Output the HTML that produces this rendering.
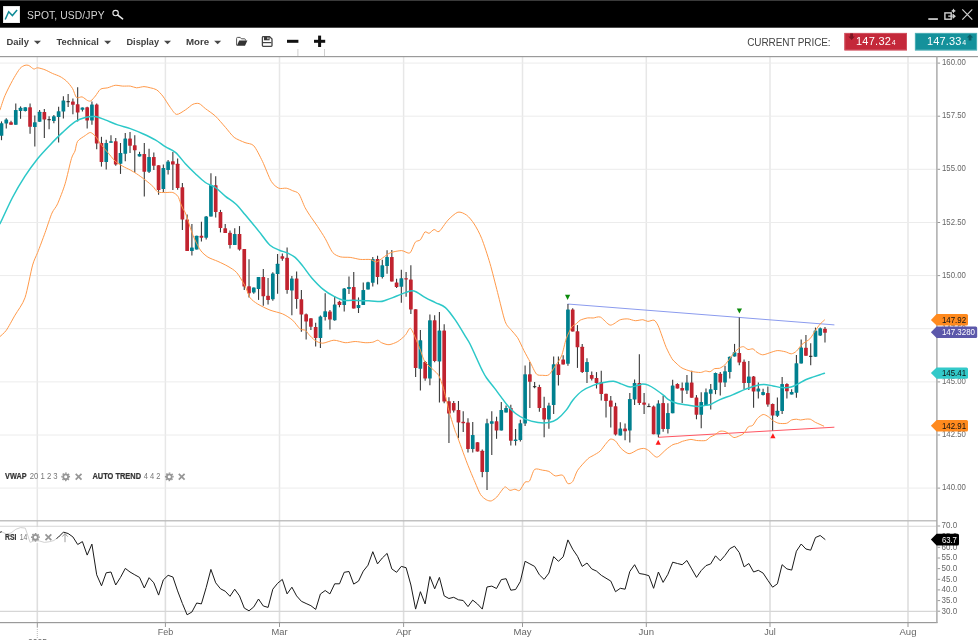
<!DOCTYPE html>
<html lang="en"><head><meta charset="utf-8"><title>SPOT, USD/JPY</title>
<style>html,body{margin:0;padding:0;background:#fff;overflow:hidden}svg{display:block;will-change:transform}text{font-family:"Liberation Sans",Arial,sans-serif}.ax{font-size:8.7px;fill:#666}.tb{font-size:9.4px;font-weight:bold;fill:#3f3f3f}.il{font-size:8.5px;font-weight:bold;fill:#333;stroke:#333;stroke-width:0.2px}.iv{font-size:8.5px;fill:#777}</style></head><body>
<svg width="978" height="640" viewBox="0 0 978 640">
<rect width="978" height="640" fill="#fff"/>
<g stroke="#e7e7e7" stroke-width="1.5">
<line x1="37.3" y1="57" x2="37.3" y2="520.5"/>
<line x1="165.4" y1="57" x2="165.4" y2="520.5"/>
<line x1="279.5" y1="57" x2="279.5" y2="520.5"/>
<line x1="403.6" y1="57" x2="403.6" y2="520.5"/>
<line x1="522.5" y1="57" x2="522.5" y2="520.5"/>
<line x1="646.3" y1="57" x2="646.3" y2="520.5"/>
<line x1="770.0" y1="57" x2="770.0" y2="520.5"/>
<line x1="908.0" y1="57" x2="908.0" y2="520.5"/>
</g>
<g stroke="#ececec" stroke-width="1">
<line x1="0" y1="63.1" x2="936" y2="63.1"/>
<line x1="0" y1="116.2" x2="936" y2="116.2"/>
<line x1="0" y1="169.3" x2="936" y2="169.3"/>
<line x1="0" y1="222.5" x2="936" y2="222.5"/>
<line x1="0" y1="275.6" x2="936" y2="275.6"/>
<line x1="0" y1="328.7" x2="936" y2="328.7"/>
<line x1="0" y1="381.9" x2="936" y2="381.9"/>
<line x1="0" y1="435.0" x2="936" y2="435.0"/>
<line x1="0" y1="488.1" x2="936" y2="488.1"/>
</g>
<g stroke="#dedede" stroke-width="1.6">
<line x1="37.3" y1="521" x2="37.3" y2="622.5"/>
<line x1="165.4" y1="521" x2="165.4" y2="622.5"/>
<line x1="279.5" y1="521" x2="279.5" y2="622.5"/>
<line x1="403.6" y1="521" x2="403.6" y2="622.5"/>
<line x1="522.5" y1="521" x2="522.5" y2="622.5"/>
<line x1="646.3" y1="521" x2="646.3" y2="622.5"/>
<line x1="770.0" y1="521" x2="770.0" y2="622.5"/>
<line x1="908.0" y1="521" x2="908.0" y2="622.5"/>
</g>
<g stroke="#d6d6d6" stroke-width="1.1">
<line x1="0" y1="526.2" x2="936" y2="526.2"/><line x1="0" y1="611.4" x2="936" y2="611.4"/>
</g>
<line x1="567.6" y1="304" x2="834.4" y2="324.9" stroke="#8b9bee" stroke-width="1.0"/>
<line x1="658.4" y1="437.3" x2="834.4" y2="427.2" stroke="#ff5562" stroke-width="1.0"/>
<g stroke="#3a3a3a" stroke-width="1.1">
<line x1="1.5" y1="121.4" x2="1.5" y2="140.2"/>
<line x1="6.26" y1="118.2" x2="6.26" y2="128.4"/>
<line x1="11.02" y1="120.7" x2="11.02" y2="124.8"/>
<line x1="15.78" y1="103.6" x2="15.78" y2="124.8"/>
<line x1="20.54" y1="106.4" x2="20.54" y2="118.8"/>
<line x1="25.3" y1="107.2" x2="25.3" y2="111.5"/>
<line x1="30.06" y1="103.6" x2="30.06" y2="133.8"/>
<line x1="34.82" y1="115.4" x2="34.82" y2="146.6"/>
<line x1="39.58" y1="110.1" x2="39.58" y2="121.8"/>
<line x1="44.34" y1="109.0" x2="44.34" y2="137.9"/>
<line x1="49.1" y1="116.2" x2="49.1" y2="129.3"/>
<line x1="53.86" y1="115.1" x2="53.86" y2="123.3"/>
<line x1="58.62" y1="106.7" x2="58.62" y2="142.4"/>
<line x1="63.38" y1="96.3" x2="63.38" y2="118.6"/>
<line x1="68.14" y1="94.0" x2="68.14" y2="107.0"/>
<line x1="72.9" y1="98.6" x2="72.9" y2="114.3"/>
<line x1="77.66" y1="87.3" x2="77.66" y2="121.6"/>
<line x1="82.42" y1="107.6" x2="82.42" y2="111.5"/>
<line x1="87.18" y1="106.8" x2="87.18" y2="128.6"/>
<line x1="91.94" y1="101.4" x2="91.94" y2="124.8"/>
<line x1="96.7" y1="103.6" x2="96.7" y2="149.3"/>
<line x1="101.46" y1="136.8" x2="101.46" y2="166.6"/>
<line x1="106.22" y1="139.8" x2="106.22" y2="169.4"/>
<line x1="110.98" y1="135.3" x2="110.98" y2="142.8"/>
<line x1="115.74" y1="137.9" x2="115.74" y2="165.7"/>
<line x1="120.5" y1="143.0" x2="120.5" y2="173.9"/>
<line x1="125.26" y1="133.1" x2="125.26" y2="161.2"/>
<line x1="130.02" y1="132.0" x2="130.02" y2="152.9"/>
<line x1="134.78" y1="135.3" x2="134.78" y2="172.5"/>
<line x1="139.54" y1="151.8" x2="139.54" y2="156.5"/>
<line x1="144.3" y1="143.0" x2="144.3" y2="196.4"/>
<line x1="149.06" y1="148.8" x2="149.06" y2="173.1"/>
<line x1="153.82" y1="152.6" x2="153.82" y2="170.0"/>
<line x1="158.58" y1="165.3" x2="158.58" y2="194.7"/>
<line x1="163.34" y1="164.4" x2="163.34" y2="192.3"/>
<line x1="168.1" y1="160.1" x2="168.1" y2="174.5"/>
<line x1="172.86" y1="152.0" x2="172.86" y2="190.0"/>
<line x1="177.62" y1="158.5" x2="177.62" y2="189.7"/>
<line x1="182.38" y1="183.1" x2="182.38" y2="230.1"/>
<line x1="187.14" y1="214.4" x2="187.14" y2="250.9"/>
<line x1="191.9" y1="223.9" x2="191.9" y2="255.4"/>
<line x1="196.66" y1="235.7" x2="196.66" y2="249.5"/>
<line x1="201.42" y1="221.7" x2="201.42" y2="241.6"/>
<line x1="206.18" y1="216.0" x2="206.18" y2="239.6"/>
<line x1="210.94" y1="173.3" x2="210.94" y2="216.6"/>
<line x1="215.7" y1="176.2" x2="215.7" y2="217.5"/>
<line x1="220.46" y1="209.9" x2="220.46" y2="232.4"/>
<line x1="225.22" y1="223.9" x2="225.22" y2="233.0"/>
<line x1="229.98" y1="230.5" x2="229.98" y2="248.6"/>
<line x1="234.74" y1="228.2" x2="234.74" y2="244.9"/>
<line x1="239.5" y1="226.1" x2="239.5" y2="250.6"/>
<line x1="244.26" y1="249.0" x2="244.26" y2="290.1"/>
<line x1="249.02" y1="259.3" x2="249.02" y2="297.6"/>
<line x1="253.78" y1="287.4" x2="253.78" y2="293.8"/>
<line x1="258.54" y1="277.0" x2="258.54" y2="299.9"/>
<line x1="263.3" y1="269.1" x2="263.3" y2="305.7"/>
<line x1="268.06" y1="278.0" x2="268.06" y2="304.4"/>
<line x1="272.82" y1="272.2" x2="272.82" y2="300.7"/>
<line x1="277.58" y1="254.1" x2="277.58" y2="293.8"/>
<line x1="282.34" y1="253.5" x2="282.34" y2="260.7"/>
<line x1="287.1" y1="247.5" x2="287.1" y2="293.8"/>
<line x1="291.86" y1="275.9" x2="291.86" y2="315.3"/>
<line x1="296.62" y1="271.4" x2="296.62" y2="308.8"/>
<line x1="301.38" y1="290.0" x2="301.38" y2="331.7"/>
<line x1="306.14" y1="313.5" x2="306.14" y2="339.6"/>
<line x1="310.9" y1="318.2" x2="310.9" y2="330.0"/>
<line x1="315.66" y1="322.7" x2="315.66" y2="346.4"/>
<line x1="320.42" y1="315.4" x2="320.42" y2="348.0"/>
<line x1="325.18" y1="293.2" x2="325.18" y2="320.5"/>
<line x1="329.94" y1="310.0" x2="329.94" y2="329.5"/>
<line x1="334.7" y1="296.0" x2="334.7" y2="320.8"/>
<line x1="339.46" y1="300.8" x2="339.46" y2="307.3"/>
<line x1="344.22" y1="287.9" x2="344.22" y2="311.5"/>
<line x1="348.98" y1="276.4" x2="348.98" y2="293.9"/>
<line x1="353.74" y1="272.1" x2="353.74" y2="308.6"/>
<line x1="358.5" y1="297.4" x2="358.5" y2="313.0"/>
<line x1="363.26" y1="282.5" x2="363.26" y2="305.0"/>
<line x1="368.02" y1="281.8" x2="368.02" y2="289.5"/>
<line x1="372.78" y1="257.1" x2="372.78" y2="286.5"/>
<line x1="377.54" y1="255.7" x2="377.54" y2="284.4"/>
<line x1="382.3" y1="259.7" x2="382.3" y2="278.5"/>
<line x1="387.06" y1="250.3" x2="387.06" y2="273.7"/>
<line x1="391.82" y1="249.9" x2="391.82" y2="281.4"/>
<line x1="396.58" y1="278.8" x2="396.58" y2="288.1"/>
<line x1="401.34" y1="269.8" x2="401.34" y2="302.8"/>
<line x1="406.1" y1="272.1" x2="406.1" y2="296.8"/>
<line x1="410.86" y1="265.3" x2="410.86" y2="314.1"/>
<line x1="415.62" y1="309.2" x2="415.62" y2="377.1"/>
<line x1="420.38" y1="330.1" x2="420.38" y2="390.4"/>
<line x1="425.14" y1="361.0" x2="425.14" y2="380.8"/>
<line x1="429.9" y1="314.4" x2="429.9" y2="385.3"/>
<line x1="434.66" y1="315.2" x2="434.66" y2="362.2"/>
<line x1="439.42" y1="312.1" x2="439.42" y2="402.5"/>
<line x1="444.18" y1="324.2" x2="444.18" y2="403.3"/>
<line x1="448.94" y1="397.3" x2="448.94" y2="443.0"/>
<line x1="453.7" y1="401.0" x2="453.7" y2="412.6"/>
<line x1="458.46" y1="401.0" x2="458.46" y2="438.2"/>
<line x1="463.22" y1="411.3" x2="463.22" y2="432.1"/>
<line x1="467.98" y1="418.2" x2="467.98" y2="452.5"/>
<line x1="472.74" y1="421.9" x2="472.74" y2="452.5"/>
<line x1="477.5" y1="442.2" x2="477.5" y2="451.5"/>
<line x1="482.26" y1="449.6" x2="482.26" y2="477.2"/>
<line x1="487.02" y1="418.8" x2="487.02" y2="489.9"/>
<line x1="491.78" y1="411.3" x2="491.78" y2="455.0"/>
<line x1="496.54" y1="416.7" x2="496.54" y2="438.8"/>
<line x1="501.3" y1="402.1" x2="501.3" y2="430.6"/>
<line x1="506.06" y1="405.6" x2="506.06" y2="412.4"/>
<line x1="510.82" y1="404.7" x2="510.82" y2="445.6"/>
<line x1="515.58" y1="429.0" x2="515.58" y2="445.6"/>
<line x1="520.34" y1="419.7" x2="520.34" y2="441.6"/>
<line x1="525.1" y1="365.5" x2="525.1" y2="426.0"/>
<line x1="529.86" y1="362.1" x2="529.86" y2="407.9"/>
<line x1="534.62" y1="382.0" x2="534.62" y2="388.2"/>
<line x1="539.38" y1="384.8" x2="539.38" y2="411.8"/>
<line x1="544.14" y1="396.8" x2="544.14" y2="437.2"/>
<line x1="548.9" y1="402.8" x2="548.9" y2="428.7"/>
<line x1="553.66" y1="356.5" x2="553.66" y2="414.0"/>
<line x1="558.42" y1="356.5" x2="558.42" y2="385.4"/>
<line x1="563.18" y1="355.2" x2="563.18" y2="364.5"/>
<line x1="567.94" y1="304.0" x2="567.94" y2="365.8"/>
<line x1="572.7" y1="308.3" x2="572.7" y2="331.6"/>
<line x1="577.46" y1="325.1" x2="577.46" y2="367.9"/>
<line x1="582.22" y1="343.9" x2="582.22" y2="373.0"/>
<line x1="586.98" y1="358.2" x2="586.98" y2="382.9"/>
<line x1="591.74" y1="371.6" x2="591.74" y2="380.6"/>
<line x1="596.5" y1="372.1" x2="596.5" y2="388.5"/>
<line x1="601.26" y1="370.7" x2="601.26" y2="400.6"/>
<line x1="606.02" y1="393.8" x2="606.02" y2="417.6"/>
<line x1="610.78" y1="396.1" x2="610.78" y2="427.6"/>
<line x1="615.54" y1="402.8" x2="615.54" y2="435.5"/>
<line x1="620.3" y1="422.3" x2="620.3" y2="435.6"/>
<line x1="625.06" y1="423.5" x2="625.06" y2="440.3"/>
<line x1="629.82" y1="393.0" x2="629.82" y2="442.4"/>
<line x1="634.58" y1="379.4" x2="634.58" y2="405.1"/>
<line x1="639.34" y1="354.3" x2="639.34" y2="405.1"/>
<line x1="644.1" y1="392.9" x2="644.1" y2="414.0"/>
<line x1="648.86" y1="403.6" x2="648.86" y2="406.7"/>
<line x1="653.62" y1="405.5" x2="653.62" y2="434.3"/>
<line x1="658.38" y1="400.3" x2="658.38" y2="437.3"/>
<line x1="663.14" y1="395.7" x2="663.14" y2="431.7"/>
<line x1="667.9" y1="403.3" x2="667.9" y2="433.6"/>
<line x1="672.66" y1="379.8" x2="672.66" y2="413.3"/>
<line x1="677.42" y1="383.3" x2="677.42" y2="388.5"/>
<line x1="682.18" y1="382.5" x2="682.18" y2="403.0"/>
<line x1="686.94" y1="374.9" x2="686.94" y2="393.9"/>
<line x1="691.7" y1="370.8" x2="691.7" y2="397.7"/>
<line x1="696.46" y1="395.1" x2="696.46" y2="419.3"/>
<line x1="701.22" y1="392.2" x2="701.22" y2="428.3"/>
<line x1="705.98" y1="388.5" x2="705.98" y2="405.0"/>
<line x1="710.74" y1="383.9" x2="710.74" y2="409.6"/>
<line x1="715.5" y1="372.5" x2="715.5" y2="394.2"/>
<line x1="720.26" y1="371.9" x2="720.26" y2="395.5"/>
<line x1="725.02" y1="365.7" x2="725.02" y2="387.1"/>
<line x1="729.78" y1="356.5" x2="729.78" y2="378.6"/>
<line x1="734.54" y1="343.9" x2="734.54" y2="356.6"/>
<line x1="739.3" y1="317.4" x2="739.3" y2="365.2"/>
<line x1="744.06" y1="359.5" x2="744.06" y2="389.3"/>
<line x1="748.82" y1="361.1" x2="748.82" y2="389.9"/>
<line x1="753.58" y1="376.0" x2="753.58" y2="407.7"/>
<line x1="758.34" y1="382.6" x2="758.34" y2="398.6"/>
<line x1="763.1" y1="388.7" x2="763.1" y2="395.5"/>
<line x1="767.86" y1="386.5" x2="767.86" y2="406.7"/>
<line x1="772.62" y1="403.5" x2="772.62" y2="430.4"/>
<line x1="777.38" y1="397.5" x2="777.38" y2="417.0"/>
<line x1="782.14" y1="376.9" x2="782.14" y2="414.1"/>
<line x1="786.9" y1="383.2" x2="786.9" y2="398.6"/>
<line x1="791.66" y1="389.3" x2="791.66" y2="394.6"/>
<line x1="796.42" y1="355.1" x2="796.42" y2="397.7"/>
<line x1="801.18" y1="339.4" x2="801.18" y2="363.5"/>
<line x1="805.94" y1="335.1" x2="805.94" y2="355.8"/>
<line x1="810.7" y1="343.3" x2="810.7" y2="365.2"/>
<line x1="815.46" y1="327.6" x2="815.46" y2="356.8"/>
<line x1="820.22" y1="327.5" x2="820.22" y2="336.0"/>
<line x1="824.98" y1="327.0" x2="824.98" y2="342.5"/>
</g>
<g fill="#00808f">
<rect x="-0.35" y="123.3" width="3.7" height="12.4" rx="0.5"/>
<rect x="4.41" y="119.6" width="3.7" height="4.0" rx="0.5"/>
<rect x="13.93" y="110.1" width="3.7" height="14.7" rx="0.5"/>
<rect x="18.69" y="107.8" width="3.7" height="3.1" rx="0.5"/>
<rect x="23.45" y="107.2" width="3.7" height="3.7" rx="0.5"/>
<rect x="32.97" y="122.2" width="3.7" height="4.8" rx="0.5"/>
<rect x="37.73" y="111.8" width="3.7" height="10.0" rx="0.5"/>
<rect x="52.01" y="116.2" width="3.7" height="4.8" rx="0.5"/>
<rect x="56.77" y="111.3" width="3.7" height="5.6" rx="0.5"/>
<rect x="61.53" y="100.6" width="3.7" height="10.9" rx="0.5"/>
<rect x="80.57" y="107.6" width="3.7" height="2.2" rx="0.4"/>
<rect x="90.09" y="104.5" width="3.7" height="16.0" rx="0.5"/>
<rect x="104.37" y="143.0" width="3.7" height="18.9" rx="0.5"/>
<rect x="109.13" y="141.3" width="3.7" height="1.5" rx="0.4"/>
<rect x="118.65" y="153.1" width="3.7" height="10.7" rx="0.5"/>
<rect x="123.41" y="138.5" width="3.7" height="15.2" rx="0.5"/>
<rect x="137.69" y="154.0" width="3.7" height="2.5" rx="0.4"/>
<rect x="147.21" y="157.0" width="3.7" height="14.7" rx="0.5"/>
<rect x="161.49" y="168.1" width="3.7" height="20.8" rx="0.5"/>
<rect x="166.25" y="161.6" width="3.7" height="8.4" rx="0.5"/>
<rect x="190.05" y="247.5" width="3.7" height="3.4" rx="0.5"/>
<rect x="194.81" y="235.7" width="3.7" height="13.8" rx="0.5"/>
<rect x="204.33" y="216.4" width="3.7" height="21.3" rx="0.5"/>
<rect x="209.09" y="184.9" width="3.7" height="31.7" rx="0.5"/>
<rect x="232.89" y="234.0" width="3.7" height="10.9" rx="0.5"/>
<rect x="251.93" y="287.4" width="3.7" height="5.2" rx="0.5"/>
<rect x="256.69" y="277.0" width="3.7" height="12.0" rx="0.5"/>
<rect x="270.97" y="273.4" width="3.7" height="25.8" rx="0.5"/>
<rect x="275.73" y="263.8" width="3.7" height="10.2" rx="0.5"/>
<rect x="290.01" y="278.5" width="3.7" height="11.9" rx="0.5"/>
<rect x="318.57" y="316.6" width="3.7" height="21.3" rx="0.5"/>
<rect x="323.33" y="311.2" width="3.7" height="5.7" rx="0.5"/>
<rect x="332.85" y="304.6" width="3.7" height="15.7" rx="0.5"/>
<rect x="342.37" y="288.4" width="3.7" height="16.6" rx="0.5"/>
<rect x="347.13" y="286.9" width="3.7" height="2.0" rx="0.4"/>
<rect x="356.65" y="305.0" width="3.7" height="3.0" rx="0.4"/>
<rect x="361.41" y="290.0" width="3.7" height="15.0" rx="0.5"/>
<rect x="366.17" y="282.2" width="3.7" height="7.3" rx="0.5"/>
<rect x="370.93" y="259.1" width="3.7" height="23.6" rx="0.5"/>
<rect x="380.45" y="265.3" width="3.7" height="11.8" rx="0.5"/>
<rect x="385.21" y="256.9" width="3.7" height="9.0" rx="0.5"/>
<rect x="399.49" y="278.2" width="3.7" height="8.5" rx="0.5"/>
<rect x="418.53" y="340.3" width="3.7" height="28.5" rx="0.5"/>
<rect x="428.05" y="320.2" width="3.7" height="58.4" rx="0.5"/>
<rect x="437.57" y="330.6" width="3.7" height="30.9" rx="0.5"/>
<rect x="470.89" y="435.1" width="3.7" height="13.8" rx="0.5"/>
<rect x="485.17" y="423.3" width="3.7" height="48.6" rx="0.5"/>
<rect x="489.93" y="421.2" width="3.7" height="2.6" rx="0.4"/>
<rect x="499.45" y="410.0" width="3.7" height="20.6" rx="0.5"/>
<rect x="504.21" y="407.9" width="3.7" height="4.5" rx="0.5"/>
<rect x="513.73" y="439.6" width="3.7" height="1.5" rx="0.4"/>
<rect x="518.49" y="423.2" width="3.7" height="16.7" rx="0.5"/>
<rect x="523.25" y="374.3" width="3.7" height="49.3" rx="0.5"/>
<rect x="547.05" y="405.5" width="3.7" height="14.1" rx="0.5"/>
<rect x="551.81" y="364.2" width="3.7" height="40.9" rx="0.5"/>
<rect x="566.09" y="309.6" width="3.7" height="54.1" rx="0.5"/>
<rect x="585.13" y="362.0" width="3.7" height="9.9" rx="0.5"/>
<rect x="618.45" y="428.6" width="3.7" height="7.0" rx="0.5"/>
<rect x="627.97" y="399.0" width="3.7" height="31.6" rx="0.5"/>
<rect x="632.73" y="383.1" width="3.7" height="16.4" rx="0.5"/>
<rect x="656.53" y="403.6" width="3.7" height="30.9" rx="0.5"/>
<rect x="666.05" y="413.1" width="3.7" height="15.8" rx="0.5"/>
<rect x="670.81" y="385.6" width="3.7" height="27.7" rx="0.5"/>
<rect x="685.09" y="382.5" width="3.7" height="8.0" rx="0.5"/>
<rect x="699.37" y="402.0" width="3.7" height="12.8" rx="0.5"/>
<rect x="704.13" y="392.2" width="3.7" height="12.8" rx="0.5"/>
<rect x="708.89" y="389.2" width="3.7" height="4.6" rx="0.5"/>
<rect x="713.65" y="373.0" width="3.7" height="16.9" rx="0.5"/>
<rect x="723.17" y="371.3" width="3.7" height="11.3" rx="0.5"/>
<rect x="727.93" y="356.8" width="3.7" height="15.3" rx="0.5"/>
<rect x="732.69" y="352.3" width="3.7" height="4.3" rx="0.5"/>
<rect x="746.97" y="376.4" width="3.7" height="6.7" rx="0.5"/>
<rect x="756.49" y="388.5" width="3.7" height="3.1" rx="0.5"/>
<rect x="761.25" y="392.1" width="3.7" height="2.8" rx="0.4"/>
<rect x="775.53" y="410.8" width="3.7" height="4.9" rx="0.5"/>
<rect x="780.29" y="384.0" width="3.7" height="27.1" rx="0.5"/>
<rect x="789.81" y="392.1" width="3.7" height="2.5" rx="0.4"/>
<rect x="794.57" y="363.2" width="3.7" height="29.5" rx="0.5"/>
<rect x="799.33" y="347.5" width="3.7" height="16.0" rx="0.5"/>
<rect x="813.61" y="330.6" width="3.7" height="26.2" rx="0.5"/>
<rect x="818.37" y="328.3" width="3.7" height="7.1" rx="0.5"/>
</g>
<g fill="#c1232f">
<rect x="9.17" y="122.2" width="3.7" height="2.6" rx="0.4"/>
<rect x="28.21" y="107.2" width="3.7" height="19.5" rx="0.5"/>
<rect x="42.49" y="112.0" width="3.7" height="7.6" rx="0.5"/>
<rect x="71.05" y="101.4" width="3.7" height="3.3" rx="0.5"/>
<rect x="75.81" y="104.2" width="3.7" height="8.2" rx="0.5"/>
<rect x="85.33" y="107.2" width="3.7" height="13.3" rx="0.5"/>
<rect x="94.85" y="104.5" width="3.7" height="39.1" rx="0.5"/>
<rect x="99.61" y="143.0" width="3.7" height="18.9" rx="0.5"/>
<rect x="113.89" y="141.3" width="3.7" height="23.1" rx="0.5"/>
<rect x="128.17" y="138.5" width="3.7" height="7.3" rx="0.5"/>
<rect x="132.93" y="145.2" width="3.7" height="5.1" rx="0.5"/>
<rect x="142.45" y="154.0" width="3.7" height="17.7" rx="0.5"/>
<rect x="151.97" y="157.0" width="3.7" height="8.7" rx="0.5"/>
<rect x="156.73" y="165.3" width="3.7" height="24.7" rx="0.5"/>
<rect x="171.01" y="161.2" width="3.7" height="3.2" rx="0.5"/>
<rect x="175.77" y="163.8" width="3.7" height="24.2" rx="0.5"/>
<rect x="180.53" y="187.3" width="3.7" height="32.3" rx="0.5"/>
<rect x="185.29" y="219.4" width="3.7" height="31.5" rx="0.5"/>
<rect x="199.57" y="235.7" width="3.7" height="2.0" rx="0.4"/>
<rect x="213.85" y="185.2" width="3.7" height="26.9" rx="0.5"/>
<rect x="218.61" y="212.1" width="3.7" height="15.8" rx="0.5"/>
<rect x="223.37" y="228.2" width="3.7" height="4.8" rx="0.5"/>
<rect x="228.13" y="232.8" width="3.7" height="12.1" rx="0.5"/>
<rect x="237.65" y="234.1" width="3.7" height="15.4" rx="0.5"/>
<rect x="242.41" y="249.0" width="3.7" height="37.6" rx="0.5"/>
<rect x="247.17" y="286.2" width="3.7" height="7.0" rx="0.5"/>
<rect x="261.45" y="277.0" width="3.7" height="19.3" rx="0.5"/>
<rect x="266.21" y="295.8" width="3.7" height="4.3" rx="0.5"/>
<rect x="280.49" y="256.2" width="3.7" height="2.5" rx="0.4"/>
<rect x="285.25" y="257.8" width="3.7" height="32.3" rx="0.5"/>
<rect x="294.77" y="278.5" width="3.7" height="20.6" rx="0.5"/>
<rect x="299.53" y="299.2" width="3.7" height="15.4" rx="0.5"/>
<rect x="304.29" y="314.3" width="3.7" height="7.1" rx="0.5"/>
<rect x="309.05" y="318.2" width="3.7" height="8.5" rx="0.5"/>
<rect x="313.81" y="327.0" width="3.7" height="10.9" rx="0.5"/>
<rect x="328.09" y="311.4" width="3.7" height="8.0" rx="0.5"/>
<rect x="337.61" y="301.8" width="3.7" height="3.3" rx="0.5"/>
<rect x="351.89" y="287.0" width="3.7" height="21.6" rx="0.5"/>
<rect x="375.69" y="259.1" width="3.7" height="17.8" rx="0.5"/>
<rect x="389.97" y="256.9" width="3.7" height="24.5" rx="0.5"/>
<rect x="394.73" y="282.5" width="3.7" height="4.5" rx="0.5"/>
<rect x="404.25" y="278.2" width="3.7" height="1.2" rx="0.4"/>
<rect x="409.01" y="279.4" width="3.7" height="30.2" rx="0.5"/>
<rect x="413.77" y="309.2" width="3.7" height="58.9" rx="0.5"/>
<rect x="423.29" y="362.0" width="3.7" height="16.6" rx="0.5"/>
<rect x="432.81" y="320.2" width="3.7" height="40.9" rx="0.5"/>
<rect x="442.33" y="330.6" width="3.7" height="71.0" rx="0.5"/>
<rect x="447.09" y="401.3" width="3.7" height="12.2" rx="0.5"/>
<rect x="451.85" y="402.9" width="3.7" height="7.7" rx="0.5"/>
<rect x="456.61" y="410.0" width="3.7" height="12.5" rx="0.5"/>
<rect x="461.37" y="421.8" width="3.7" height="1.4" rx="0.4"/>
<rect x="466.13" y="422.6" width="3.7" height="26.3" rx="0.5"/>
<rect x="475.65" y="442.2" width="3.7" height="9.3" rx="0.5"/>
<rect x="480.41" y="450.7" width="3.7" height="21.2" rx="0.5"/>
<rect x="494.69" y="421.2" width="3.7" height="9.4" rx="0.5"/>
<rect x="508.97" y="408.1" width="3.7" height="32.6" rx="0.5"/>
<rect x="528.01" y="374.3" width="3.7" height="7.5" rx="0.5"/>
<rect x="537.53" y="387.1" width="3.7" height="21.0" rx="0.5"/>
<rect x="542.29" y="407.9" width="3.7" height="11.7" rx="0.5"/>
<rect x="556.57" y="364.2" width="3.7" height="10.8" rx="0.5"/>
<rect x="561.33" y="359.6" width="3.7" height="4.9" rx="0.5"/>
<rect x="570.85" y="309.6" width="3.7" height="22.0" rx="0.5"/>
<rect x="575.61" y="331.2" width="3.7" height="16.1" rx="0.5"/>
<rect x="580.37" y="346.7" width="3.7" height="25.4" rx="0.5"/>
<rect x="589.89" y="375.0" width="3.7" height="3.8" rx="0.5"/>
<rect x="594.65" y="378.1" width="3.7" height="5.0" rx="0.5"/>
<rect x="599.41" y="382.2" width="3.7" height="11.9" rx="0.5"/>
<rect x="604.17" y="393.8" width="3.7" height="7.1" rx="0.5"/>
<rect x="608.93" y="400.4" width="3.7" height="6.4" rx="0.5"/>
<rect x="613.69" y="406.3" width="3.7" height="28.1" rx="0.5"/>
<rect x="623.21" y="428.6" width="3.7" height="2.7" rx="0.4"/>
<rect x="637.49" y="383.1" width="3.7" height="19.8" rx="0.5"/>
<rect x="642.25" y="402.6" width="3.7" height="2.1" rx="0.4"/>
<rect x="651.77" y="406.4" width="3.7" height="27.9" rx="0.5"/>
<rect x="661.29" y="403.1" width="3.7" height="25.8" rx="0.5"/>
<rect x="675.57" y="383.9" width="3.7" height="4.6" rx="0.5"/>
<rect x="680.33" y="388.0" width="3.7" height="2.6" rx="0.4"/>
<rect x="689.85" y="382.5" width="3.7" height="15.2" rx="0.5"/>
<rect x="694.61" y="397.5" width="3.7" height="17.3" rx="0.5"/>
<rect x="718.41" y="373.7" width="3.7" height="8.9" rx="0.5"/>
<rect x="737.45" y="352.9" width="3.7" height="9.6" rx="0.5"/>
<rect x="742.21" y="361.7" width="3.7" height="21.4" rx="0.5"/>
<rect x="751.73" y="376.6" width="3.7" height="15.0" rx="0.5"/>
<rect x="766.01" y="393.0" width="3.7" height="11.5" rx="0.5"/>
<rect x="770.77" y="404.0" width="3.7" height="11.6" rx="0.5"/>
<rect x="785.05" y="384.0" width="3.7" height="7.2" rx="0.5"/>
<rect x="804.09" y="347.8" width="3.7" height="8.0" rx="0.5"/>
<rect x="823.13" y="328.7" width="3.7" height="4.1" rx="0.5"/>
</g>
<g fill="#222">
<rect x="47.40" y="119.2" width="3.4" height="1"/>
<rect x="66.44" y="101.2" width="3.4" height="1"/>
<rect x="532.92" y="386.2" width="3.4" height="1"/>
<rect x="647.16" y="406.1" width="3.4" height="1"/>
<rect x="809.00" y="355.8" width="3.4" height="1"/>
</g>
<path d="M0.0,109.9 C0.7,108.0 3.3,99.4 5.0,95.5 C6.7,91.6 10.5,84.1 12.5,80.5 C14.5,76.9 18.3,70.5 20.0,68.5 C21.7,66.5 23.8,65.7 25.0,65.3 C26.2,64.9 27.6,65.0 28.8,65.5 C30.0,66.0 32.6,68.7 33.8,69.0 C35.0,69.3 36.1,67.7 37.6,67.8 C39.1,67.9 43.0,69.0 45.0,69.8 C47.0,70.6 50.6,72.6 52.6,73.5 C54.6,74.4 58.2,75.5 60.0,76.5 C61.8,77.5 64.7,79.4 66.4,81.0 C68.1,82.6 71.3,86.4 72.6,88.6 C73.9,90.8 75.2,96.4 76.5,97.5 C77.8,98.6 80.6,96.5 82.1,96.9 C83.6,97.3 86.5,100.1 87.7,100.6 C88.9,101.1 90.0,101.4 91.0,100.8 C92.0,100.2 94.1,97.5 95.4,96.0 C96.7,94.5 98.9,90.3 100.5,89.2 C102.1,88.1 105.7,88.3 107.7,87.8 C109.7,87.3 113.2,85.5 115.2,85.3 C117.2,85.1 120.7,86.0 122.7,86.1 C124.7,86.2 128.5,85.9 130.3,86.1 C132.1,86.3 134.7,87.7 136.5,87.8 C138.3,87.9 142.2,86.6 144.0,86.6 C145.8,86.6 148.6,87.4 150.3,87.8 C152.0,88.2 154.9,88.7 156.6,89.8 C158.3,90.9 161.0,93.8 162.8,96.1 C164.6,98.4 168.5,105.0 170.3,107.4 C172.1,109.8 174.6,114.1 176.6,114.4 C178.6,114.7 183.2,111.2 185.4,109.9 C187.6,108.6 191.1,105.1 192.9,104.3 C194.7,103.5 197.4,103.0 199.1,103.6 C200.8,104.2 203.2,106.9 205.4,108.6 C207.6,110.3 212.7,113.6 215.4,116.1 C218.1,118.6 223.0,124.6 225.5,127.4 C228.0,130.2 231.6,135.4 234.2,137.4 C236.8,139.4 242.4,141.5 245.0,142.6 C247.6,143.7 251.5,143.3 253.8,145.8 C256.1,148.3 260.2,156.7 262.5,161.4 C264.8,166.1 269.1,177.8 271.3,181.4 C273.5,185.0 276.8,187.3 278.8,188.2 C280.8,189.1 284.5,187.9 286.3,188.2 C288.1,188.5 290.9,189.9 292.6,190.7 C294.3,191.5 297.2,191.6 298.9,193.9 C300.6,196.2 303.4,204.5 305.1,207.7 C306.8,210.9 309.7,215.2 311.4,217.7 C313.1,220.2 315.8,223.7 317.6,226.5 C319.4,229.3 323.2,235.0 325.2,238.5 C327.2,242.0 330.7,250.1 332.7,252.5 C334.7,254.9 337.9,256.1 340.2,256.8 C342.5,257.5 347.5,257.1 350.2,257.4 C352.9,257.7 357.5,259.1 360.2,259.4 C362.9,259.7 368.1,259.2 370.3,259.5 C372.5,259.8 374.8,262.2 376.5,262.0 C378.2,261.8 381.0,259.0 382.8,257.8 C384.6,256.6 387.8,253.8 390.3,252.8 C392.8,251.8 399.0,250.6 401.6,250.6 C404.2,250.6 408.0,254.1 409.8,253.0 C411.6,251.9 413.9,244.0 415.3,242.2 C416.7,240.4 419.1,241.2 420.4,239.8 C421.7,238.4 423.7,232.9 424.9,232.0 C426.1,231.1 427.9,233.6 429.1,233.3 C430.3,233.0 432.8,229.7 434.1,229.5 C435.4,229.3 437.3,232.7 439.1,231.5 C440.9,230.3 445.4,222.8 447.9,220.2 C450.4,217.6 455.4,212.9 457.9,212.2 C460.4,211.5 464.5,213.6 466.7,215.2 C468.9,216.8 472.2,220.9 474.2,224.0 C476.2,227.1 479.6,233.2 481.7,238.5 C483.8,243.8 487.9,256.3 490.0,263.5 C492.1,270.7 495.6,284.9 497.6,292.6 C499.6,300.3 503.3,316.4 505.1,321.4 C506.9,326.4 509.6,328.0 511.3,330.2 C513.0,332.4 515.9,335.0 517.6,337.7 C519.3,340.4 522.2,347.3 523.9,350.5 C525.6,353.7 528.4,358.9 530.1,362.0 C531.8,365.1 534.7,372.2 536.4,374.0 C538.1,375.8 540.9,375.2 542.6,375.3 C544.3,375.4 547.2,376.0 548.9,374.8 C550.6,373.6 553.5,368.5 555.2,366.0 C556.9,363.5 560.0,359.7 561.5,356.0 C563.0,352.3 564.9,342.4 566.3,338.5 C567.7,334.6 570.5,329.0 571.8,327.0 C573.1,325.0 575.3,324.6 576.4,323.7 C577.5,322.8 578.7,321.0 580.2,320.2 C581.7,319.4 586.0,318.2 587.7,317.9 C589.4,317.6 591.5,318.1 593.2,318.0 C594.9,317.9 598.1,316.2 600.4,317.1 C602.7,318.0 607.6,324.7 610.2,325.1 C612.8,325.5 617.9,320.6 620.2,319.8 C622.5,319.0 625.8,318.8 627.8,318.9 C629.8,319.0 633.3,320.6 635.3,320.7 C637.3,320.8 641.1,319.6 642.8,319.7 C644.5,319.8 646.3,321.3 647.8,321.4 C649.3,321.5 652.8,319.7 654.1,320.2 C655.4,320.7 656.8,323.1 657.9,325.2 C659.0,327.3 660.9,333.0 662.0,336.0 C663.1,339.0 664.9,344.4 666.2,347.4 C667.5,350.4 670.6,356.5 671.9,358.6 C673.2,360.7 674.7,361.7 676.0,363.0 C677.3,364.3 680.0,366.9 682.0,368.0 C684.0,369.1 688.6,370.7 691.0,371.3 C693.4,371.9 698.4,372.5 700.3,372.5 C702.2,372.5 704.3,371.1 705.6,371.0 C706.9,370.9 708.9,372.0 710.1,371.7 C711.3,371.4 713.3,369.1 714.6,368.6 C715.9,368.1 718.2,368.8 719.5,368.3 C720.8,367.8 723.2,366.4 724.6,365.1 C726.0,363.8 728.8,359.9 730.1,358.2 C731.4,356.5 733.2,353.7 734.5,352.3 C735.8,350.9 738.4,348.5 739.6,347.8 C740.8,347.1 742.4,346.5 743.5,346.7 C744.6,346.9 746.7,349.2 748.0,349.5 C749.3,349.8 751.8,348.5 753.0,348.9 C754.2,349.3 755.7,351.5 757.0,352.3 C758.3,353.1 760.9,354.7 762.6,354.8 C764.3,354.9 767.5,353.5 769.4,352.9 C771.3,352.3 775.1,350.8 777.2,350.6 C779.3,350.4 783.2,351.3 785.1,351.7 C787.0,352.1 789.8,353.9 791.3,353.8 C792.8,353.7 795.0,352.5 796.4,351.2 C797.8,349.9 800.2,346.1 802.0,344.4 C803.8,342.7 808.1,340.7 809.9,338.8 C811.7,336.9 814.2,332.3 815.5,330.4 C816.8,328.5 818.8,325.6 820.0,324.2 C821.2,322.8 823.9,320.6 824.5,320.0" fill="none" stroke="#ff9a4a" stroke-width="1.0" stroke-linejoin="round" stroke-linecap="round" />
<path d="M0.0,336.5 C0.8,335.7 4.3,333.1 6.3,330.3 C8.3,327.5 12.5,319.5 15.0,315.2 C17.5,310.9 22.7,304.4 25.0,297.7 C27.3,291.0 30.9,271.1 32.6,265.1 C34.3,259.1 35.9,256.9 37.6,252.6 C39.3,248.3 43.2,237.9 45.1,232.6 C47.0,227.3 50.3,216.8 52.0,213.0 C53.7,209.2 55.9,207.7 57.6,203.8 C59.3,199.9 63.3,189.8 65.1,183.8 C66.9,177.8 70.1,163.1 71.4,158.7 C72.7,154.3 74.2,153.3 75.0,151.0 C75.8,148.7 76.2,143.4 77.6,141.3 C79.0,139.2 83.7,136.6 85.4,135.4 C87.1,134.2 89.1,132.4 90.4,132.5 C91.7,132.6 94.1,134.8 95.4,136.2 C96.7,137.6 99.1,141.8 100.2,143.3 C101.3,144.8 102.5,146.3 103.5,147.5 C104.5,148.7 106.0,150.5 107.6,152.3 C109.2,154.1 113.2,159.3 115.2,161.2 C117.2,163.1 120.7,165.0 122.7,166.2 C124.7,167.4 128.5,169.0 130.3,170.0 C132.1,171.0 134.5,172.4 136.5,173.7 C138.5,175.0 143.1,178.3 145.3,180.0 C147.5,181.7 151.1,184.7 152.8,186.3 C154.5,187.9 156.1,191.2 157.8,192.0 C159.5,192.8 163.3,192.4 165.3,192.5 C167.3,192.6 171.1,192.0 172.8,192.5 C174.5,193.0 176.9,194.9 177.9,196.3 C178.9,197.7 179.8,201.3 180.5,203.0 C181.2,204.7 182.2,207.3 182.9,208.8 C183.6,210.3 184.5,210.5 185.8,214.0 C187.1,217.5 191.0,230.3 192.9,235.1 C194.8,239.9 198.4,247.2 200.4,250.1 C202.4,253.0 205.6,255.6 207.9,257.1 C210.2,258.6 215.2,260.2 217.9,261.4 C220.6,262.6 225.5,264.9 228.0,266.4 C230.5,267.9 234.4,270.0 236.7,272.6 C239.0,275.2 243.2,282.5 245.0,285.8 C246.8,289.1 248.3,295.2 250.0,297.6 C251.7,300.0 254.8,302.2 257.5,303.9 C260.2,305.6 266.7,308.8 270.0,310.1 C273.3,311.4 279.6,312.6 282.6,313.9 C285.6,315.2 290.3,318.2 292.6,320.2 C294.9,322.2 298.4,327.6 300.1,328.9 C301.8,330.2 304.3,329.6 305.5,330.3 C306.7,331.0 307.6,333.1 308.9,334.5 C310.2,335.9 313.3,339.3 315.1,340.5 C316.9,341.7 320.2,343.2 322.7,343.2 C325.2,343.2 330.9,340.3 333.9,340.2 C336.9,340.1 342.4,342.5 345.2,342.7 C348.0,342.9 352.5,341.5 355.2,341.5 C357.9,341.5 362.9,342.6 365.2,342.7 C367.5,342.8 371.1,342.5 372.8,342.2 C374.5,341.9 376.6,340.1 377.8,340.2 C379.0,340.3 380.0,342.1 381.5,342.7 C383.0,343.3 386.8,344.9 389.0,344.7 C391.2,344.5 395.6,342.8 397.8,341.5 C400.0,340.2 403.6,337.0 405.3,335.2 C407.0,333.4 409.0,327.9 410.3,328.2 C411.6,328.5 414.0,334.8 415.3,337.7 C416.6,340.6 419.1,347.0 420.4,350.2 C421.7,353.4 423.1,359.0 424.8,361.6 C426.5,364.2 431.4,367.9 433.3,369.8 C435.2,371.7 437.5,373.3 438.9,375.8 C440.3,378.3 442.4,384.9 443.5,388.5 C444.6,392.1 446.2,399.2 447.0,402.5 C447.8,405.8 448.4,409.1 449.5,412.9 C450.6,416.7 454.1,427.9 455.1,430.9 C456.1,433.9 455.4,431.2 457.0,435.5 C458.6,439.8 464.7,456.9 467.1,463.1 C469.5,469.3 473.2,478.0 475.0,482.2 C476.8,486.4 479.1,492.3 480.6,494.6 C482.1,496.9 484.8,498.9 486.2,499.7 C487.6,500.5 489.9,501.3 491.3,500.9 C492.7,500.5 495.4,498.4 496.8,497.0 C498.2,495.6 500.9,491.4 502.0,490.1 C503.1,488.8 504.2,486.9 505.3,486.9 C506.4,486.9 508.6,490.0 509.9,490.3 C511.2,490.6 513.6,489.2 514.9,489.2 C516.2,489.2 518.3,491.4 519.6,490.5 C520.9,489.6 523.7,483.5 525.0,482.2 C526.3,480.9 528.2,482.7 529.5,481.0 C530.8,479.3 532.9,470.8 534.6,469.4 C536.3,468.0 540.7,469.9 542.6,470.2 C544.5,470.5 547.2,470.6 548.9,471.4 C550.6,472.2 553.4,475.4 555.2,475.9 C557.0,476.4 561.0,474.2 562.7,475.2 C564.4,476.2 566.4,482.7 567.7,483.5 C569.0,484.3 571.4,483.3 572.7,481.5 C574.0,479.7 575.7,473.2 577.7,470.2 C579.7,467.2 585.6,460.9 587.7,458.9 C589.8,456.9 591.6,456.5 593.2,455.5 C594.8,454.5 598.4,452.7 600.0,451.2 C601.6,449.7 603.9,446.1 605.3,444.5 C606.7,442.9 608.9,439.7 610.2,439.2 C611.5,438.7 613.8,439.6 615.3,440.8 C616.8,442.0 619.4,446.8 621.2,448.5 C623.0,450.2 626.8,453.6 629.1,453.7 C631.4,453.8 636.2,450.2 638.1,449.5 C640.0,448.8 642.3,448.3 643.7,448.4 C645.1,448.5 647.1,449.4 648.6,450.5 C650.1,451.6 653.7,455.6 655.0,456.4 C656.3,457.2 656.9,457.5 658.4,456.6 C659.9,455.7 664.1,451.2 666.0,449.6 C667.9,448.0 671.5,445.4 673.0,444.6 C674.5,443.8 676.2,443.9 677.5,443.5 C678.8,443.1 680.7,441.8 682.5,441.3 C684.3,440.8 689.1,439.5 691.0,439.4 C692.9,439.3 694.7,440.4 696.7,440.5 C698.7,440.6 703.9,441.0 705.7,440.5 C707.5,440.0 709.0,437.8 710.2,437.1 C711.4,436.4 713.4,435.7 714.7,434.9 C716.0,434.1 718.4,431.8 719.8,431.3 C721.2,430.8 723.7,431.2 724.9,431.5 C726.1,431.8 727.6,432.9 728.8,433.7 C730.0,434.5 732.5,437.2 733.9,437.5 C735.3,437.8 738.2,436.4 739.5,435.8 C740.8,435.2 742.8,434.4 744.0,433.2 C745.2,432.0 747.1,428.0 748.3,426.9 C749.5,425.8 751.6,426.4 752.8,425.3 C754.0,424.2 756.0,419.9 757.4,418.5 C758.8,417.1 761.7,414.7 763.2,414.5 C764.7,414.3 766.9,415.8 768.3,416.7 C769.7,417.6 772.1,420.0 773.5,420.9 C774.9,421.8 777.3,423.0 779.0,423.3 C780.7,423.6 784.9,423.7 786.6,423.3 C788.3,422.9 790.2,420.5 791.5,420.0 C792.8,419.5 795.2,419.2 796.4,419.2 C797.6,419.2 799.3,420.0 800.5,420.0 C801.7,420.0 804.1,419.3 805.4,419.2 C806.7,419.1 809.0,418.8 810.3,419.2 C811.6,419.6 814.0,421.6 815.3,422.3 C816.6,423.0 818.9,423.9 820.0,424.4 C821.1,424.9 823.2,425.9 823.7,426.1" fill="none" stroke="#ff9a4a" stroke-width="1.0" stroke-linejoin="round" stroke-linecap="round" />
<path d="M0.0,223.8 C0.4,222.9 0.4,222.9 2.5,218.5 C4.6,214.1 8.8,204.6 12.5,197.5 C16.2,190.4 20.8,182.7 25.0,176.2 C29.2,169.7 33.4,163.9 37.6,158.7 C41.8,153.5 45.9,149.3 50.1,144.9 C54.3,140.5 58.4,136.3 62.6,132.4 C66.8,128.5 71.4,124.1 75.2,121.6 C79.0,119.1 81.9,118.2 85.2,117.4 C88.5,116.6 91.9,116.2 95.2,116.6 C98.5,117.0 101.5,118.5 105.2,119.9 C109.0,121.3 113.5,123.5 117.7,124.9 C121.9,126.4 126.1,127.1 130.3,128.6 C134.5,130.1 138.6,131.8 142.8,133.7 C147.0,135.6 151.6,137.7 155.3,139.9 C159.1,142.1 162.0,144.6 165.3,146.7 C168.7,148.8 172.1,149.6 175.4,152.4 C178.8,155.2 182.1,160.1 185.4,163.7 C188.7,167.2 192.1,170.6 195.4,173.7 C198.7,176.8 202.1,180.2 205.4,182.5 C208.7,184.8 212.1,185.2 215.4,187.5 C218.8,189.8 222.2,193.6 225.5,196.3 C228.8,199.0 232.2,200.8 235.5,203.8 C238.8,206.8 242.0,211.0 245.0,214.5 C248.0,218.0 251.0,221.8 253.7,225.0 C256.4,228.2 258.3,230.6 261.0,234.0 C263.7,237.4 266.9,242.5 270.0,245.2 C273.1,247.9 276.5,248.9 279.4,250.2 C282.3,251.5 284.8,251.8 287.4,253.0 C290.0,254.2 292.5,255.2 295.1,257.4 C297.7,259.6 300.2,262.9 303.0,266.4 C305.8,269.9 308.6,274.4 312.0,278.2 C315.4,282.0 319.4,286.3 323.2,289.4 C326.9,292.5 331.1,294.9 334.5,296.7 C337.9,298.5 340.4,299.7 343.5,300.3 C346.6,300.9 348.8,300.2 353.0,300.3 C357.2,300.4 364.2,300.5 368.7,300.7 C373.2,300.9 377.2,301.7 380.0,301.6 C382.8,301.5 383.5,300.9 385.6,300.2 C387.7,299.5 389.5,298.9 392.8,297.6 C396.1,296.3 401.8,293.7 405.3,292.6 C408.9,291.5 410.8,290.1 414.1,290.9 C417.5,291.7 421.8,295.7 425.4,297.6 C428.9,299.6 432.1,300.9 435.4,302.6 C438.7,304.3 442.1,304.7 445.4,307.6 C448.7,310.5 452.1,315.4 455.4,320.2 C458.7,325.0 463.0,332.4 465.4,336.4 C467.8,340.4 468.0,340.0 470.0,344.0 C472.0,348.0 475.5,355.8 477.5,360.2 C479.5,364.6 480.6,367.1 482.1,370.1 C483.6,373.1 484.5,375.0 486.6,378.0 C488.7,381.0 492.1,384.9 494.5,388.1 C496.9,391.3 498.9,394.1 501.2,397.1 C503.4,400.1 505.6,403.4 508.0,406.1 C510.4,408.8 512.7,411.3 515.6,413.5 C518.5,415.7 521.5,417.6 525.2,419.1 C529.0,420.6 534.2,421.9 538.1,422.5 C542.0,423.1 545.6,423.1 548.8,422.5 C552.0,421.9 554.3,421.2 557.2,419.1 C560.1,417.0 563.6,413.3 566.2,410.1 C568.8,406.9 570.4,403.2 573.0,400.0 C575.6,396.8 578.6,393.4 582.0,391.0 C585.4,388.6 589.6,386.8 593.2,385.4 C596.8,384.0 600.0,383.3 603.4,382.6 C606.8,381.9 610.5,381.1 613.5,381.3 C616.5,381.5 618.4,382.9 621.2,383.9 C624.0,384.8 627.2,386.8 630.2,387.0 C633.2,387.2 637.1,385.5 639.2,385.0 C641.3,384.5 641.1,383.9 642.6,383.9 C644.1,383.9 646.1,384.2 648.2,385.1 C650.3,386.0 652.4,387.2 655.0,389.0 C657.6,390.8 661.8,393.9 664.0,395.7 C666.2,397.5 666.2,398.3 668.5,399.6 C670.8,400.9 674.1,402.7 677.5,403.6 C680.9,404.5 685.3,404.7 688.7,405.2 C692.1,405.7 694.7,406.4 697.7,406.4 C700.7,406.4 704.5,405.6 706.7,405.2 C709.0,404.8 709.0,405.1 711.2,404.2 C713.4,403.3 716.5,401.2 720.0,399.6 C723.5,398.1 728.5,396.5 732.5,394.9 C736.5,393.3 740.0,391.4 743.7,389.9 C747.5,388.4 751.6,386.8 755.0,385.9 C758.4,385.0 761.0,384.5 764.0,384.5 C767.0,384.5 770.0,385.4 773.0,385.9 C776.0,386.4 779.0,387.4 782.0,387.6 C785.0,387.8 788.4,387.7 791.0,387.1 C793.6,386.5 795.3,385.4 797.7,384.2 C800.1,383.0 803.0,380.9 805.6,379.7 C808.2,378.5 811.1,377.7 813.5,376.9 C815.9,376.1 818.2,375.3 820.0,374.7 C821.8,374.1 823.7,373.4 824.4,373.2" fill="none" stroke="#2cc8c8" stroke-width="1.5" stroke-linejoin="round" stroke-linecap="round" />
<polygon points="565.0,294.8 570.2,294.8 567.6,300.0" fill="#0a8a0a"/>
<polygon points="736.8,308.4 742.0,308.4 739.4,313.59999999999997" fill="#0a8a0a"/>
<polygon points="655.6,444.8 660.8000000000001,444.8 658.2,439.8" fill="#ff1a1a"/>
<polygon points="770.3,438.2 775.5,438.2 772.9,433.2" fill="#ff1a1a"/>
<polyline points="0.0,532.3 1.5,531.8 6.3,534.0 11.0,533.0 15.8,529.3 20.5,527.6 25.3,528.1 30.1,542.4 34.8,540.5 39.6,541.0 44.3,542.4 49.1,541.8 53.9,540.5 58.6,537.0 63.4,532.1 68.1,533.5 72.9,536.9 77.7,544.5 82.4,541.6 87.2,555.1 91.9,544.1 96.7,574.8 101.5,585.8 106.2,572.8 111.0,572.0 115.7,585.0 120.5,577.4 125.3,568.4 130.0,572.0 134.8,574.8 139.5,577.4 144.3,588.0 149.1,577.7 153.8,582.8 158.6,595.1 163.3,579.9 168.1,575.3 172.9,577.0 177.6,590.9 182.4,603.5 187.1,614.8 191.9,612.0 196.7,603.0 201.4,603.9 206.2,587.5 210.9,569.4 215.7,582.8 220.5,588.8 225.2,591.2 230.0,596.3 234.7,589.2 239.5,595.9 244.3,608.1 249.0,610.8 253.8,606.9 258.5,599.0 263.3,606.0 268.1,607.4 272.8,589.2 277.6,583.3 282.3,579.4 287.1,593.9 291.9,587.2 296.6,595.9 301.4,601.3 306.1,603.5 310.9,605.7 315.7,609.4 320.4,594.0 325.2,590.5 329.9,593.9 334.7,583.8 339.5,583.8 344.2,572.3 349.0,571.5 353.7,584.1 358.5,581.1 363.3,571.1 368.0,565.2 372.8,551.7 377.5,563.9 382.3,558.0 387.1,553.4 391.8,568.9 396.6,572.3 401.3,566.4 406.1,567.7 410.9,585.0 415.6,609.1 420.4,591.7 425.1,603.9 429.9,576.5 434.7,588.8 439.4,577.4 444.2,595.9 448.9,598.5 453.7,597.3 458.5,599.8 463.2,600.5 468.0,606.6 472.7,600.1 477.5,604.0 482.3,609.1 487.0,587.0 491.8,586.1 496.5,588.5 501.3,579.6 506.1,578.7 510.8,590.2 515.6,589.5 520.3,581.6 525.1,561.3 529.9,563.9 534.6,566.4 539.4,574.8 544.1,579.4 548.9,573.1 553.7,556.6 558.4,561.3 563.2,556.8 567.9,539.9 572.7,549.2 577.5,556.3 582.2,566.4 587.0,563.0 591.7,568.9 596.5,571.1 601.3,575.3 606.0,578.2 610.8,581.1 615.5,591.7 620.3,588.3 625.1,589.2 629.8,571.5 634.6,564.7 639.3,573.5 644.1,574.3 648.9,575.7 653.6,588.3 658.4,572.0 663.1,582.4 667.9,574.3 672.7,562.2 677.4,563.5 682.2,564.7 686.9,560.5 691.7,568.9 696.5,577.4 701.2,570.6 706.0,565.6 710.7,563.9 715.5,555.8 720.3,560.8 725.0,555.4 729.8,548.7 734.5,546.2 739.3,552.6 744.1,566.9 748.8,563.5 753.6,572.0 758.3,570.3 763.1,573.1 767.9,580.4 772.6,587.2 777.4,583.8 782.1,564.7 786.9,568.9 791.7,570.1 796.4,551.2 801.2,544.0 805.9,549.0 810.7,550.2 815.5,537.5 820.2,535.5 825.0,539.4" fill="none" stroke="#1a1a1a" stroke-width="1.0" stroke-linejoin="round" stroke-linecap="round" />
<rect x="2" y="527" width="54.5" height="16" fill="#fff" fill-opacity="0.8"/>
<rect x="0" y="56" width="978" height="1.2" fill="#9a9a9a"/>
<rect x="0" y="520.2" width="937" height="1.2" fill="#b2b2b2"/>
<rect x="0" y="622" width="937.5" height="1.2" fill="#9a9a9a"/>
<rect x="936.2" y="56" width="1.4" height="567" fill="#a6a6a6"/>
<g class="ax">
<rect x="937.5" y="62.6" width="2.6" height="1" fill="#999"/>
<text x="942" y="65.1" textLength="23.8" lengthAdjust="spacingAndGlyphs">160.00</text>
<rect x="937.5" y="115.7" width="2.6" height="1" fill="#999"/>
<text x="942" y="118.2" textLength="23.8" lengthAdjust="spacingAndGlyphs">157.50</text>
<rect x="937.5" y="168.8" width="2.6" height="1" fill="#999"/>
<text x="942" y="171.3" textLength="23.8" lengthAdjust="spacingAndGlyphs">155.00</text>
<rect x="937.5" y="222.0" width="2.6" height="1" fill="#999"/>
<text x="942" y="224.5" textLength="23.8" lengthAdjust="spacingAndGlyphs">152.50</text>
<rect x="937.5" y="275.1" width="2.6" height="1" fill="#999"/>
<text x="942" y="277.6" textLength="23.8" lengthAdjust="spacingAndGlyphs">150.00</text>
<rect x="937.5" y="328.2" width="2.6" height="1" fill="#999"/>
<text x="942" y="330.7" textLength="23.8" lengthAdjust="spacingAndGlyphs">147.50</text>
<rect x="937.5" y="381.4" width="2.6" height="1" fill="#999"/>
<text x="942" y="383.9" textLength="23.8" lengthAdjust="spacingAndGlyphs">145.00</text>
<rect x="937.5" y="434.5" width="2.6" height="1" fill="#999"/>
<text x="942" y="437.0" textLength="23.8" lengthAdjust="spacingAndGlyphs">142.50</text>
<rect x="937.5" y="487.6" width="2.6" height="1" fill="#999"/>
<text x="942" y="490.1" textLength="23.8" lengthAdjust="spacingAndGlyphs">140.00</text>
<rect x="937.5" y="525.5" width="2.6" height="1" fill="#999"/>
<text x="941.5" y="528.3" textLength="15.6" lengthAdjust="spacingAndGlyphs">70.0</text>
<rect x="937.5" y="536.2" width="2.6" height="1" fill="#999"/>
<text x="941.5" y="539.0" textLength="15.6" lengthAdjust="spacingAndGlyphs">65.0</text>
<rect x="937.5" y="546.8" width="2.6" height="1" fill="#999"/>
<text x="941.5" y="549.6" textLength="15.6" lengthAdjust="spacingAndGlyphs">60.0</text>
<rect x="937.5" y="557.5" width="2.6" height="1" fill="#999"/>
<text x="941.5" y="560.3" textLength="15.6" lengthAdjust="spacingAndGlyphs">55.0</text>
<rect x="937.5" y="568.1" width="2.6" height="1" fill="#999"/>
<text x="941.5" y="570.9" textLength="15.6" lengthAdjust="spacingAndGlyphs">50.0</text>
<rect x="937.5" y="578.8" width="2.6" height="1" fill="#999"/>
<text x="941.5" y="581.6" textLength="15.6" lengthAdjust="spacingAndGlyphs">45.0</text>
<rect x="937.5" y="589.4" width="2.6" height="1" fill="#999"/>
<text x="941.5" y="592.2" textLength="15.6" lengthAdjust="spacingAndGlyphs">40.0</text>
<rect x="937.5" y="600.1" width="2.6" height="1" fill="#999"/>
<text x="941.5" y="602.9" textLength="15.6" lengthAdjust="spacingAndGlyphs">35.0</text>
<rect x="937.5" y="610.7" width="2.6" height="1" fill="#999"/>
<text x="941.5" y="613.5" textLength="15.6" lengthAdjust="spacingAndGlyphs">30.0</text>
<rect x="164.9" y="622" width="1" height="5" fill="#999"/>
<text x="157.7" y="635.2" textLength="15.5" lengthAdjust="spacingAndGlyphs">Feb</text>
<rect x="279.0" y="622" width="1" height="5" fill="#999"/>
<text x="271.5" y="635.2" textLength="16" lengthAdjust="spacingAndGlyphs">Mar</text>
<rect x="403.1" y="622" width="1" height="5" fill="#999"/>
<text x="395.9" y="635.2" textLength="15.5" lengthAdjust="spacingAndGlyphs">Apr</text>
<rect x="522.0" y="622" width="1" height="5" fill="#999"/>
<text x="513.5" y="635.2" textLength="18" lengthAdjust="spacingAndGlyphs">May</text>
<rect x="645.8" y="622" width="1" height="5" fill="#999"/>
<text x="638.5" y="635.2" textLength="15.5" lengthAdjust="spacingAndGlyphs">Jun</text>
<rect x="769.5" y="622" width="1" height="5" fill="#999"/>
<text x="764.2" y="635.2" textLength="11.5" lengthAdjust="spacingAndGlyphs">Jul</text>
<rect x="907.5" y="622" width="1" height="5" fill="#999"/>
<text x="899.5" y="635.2" textLength="17" lengthAdjust="spacingAndGlyphs">Aug</text>
<rect x="36.8" y="622" width="1" height="5" fill="#999"/>
<line x1="37.3" y1="627" x2="37.3" y2="638" stroke="#bbb" stroke-width="1" stroke-dasharray="1,1"/>
<text x="28" y="644.9" textLength="19" lengthAdjust="spacingAndGlyphs">2025</text>
</g>
<path d="M930.9,319.9 L936.6,314.1 L966.5,314.1 Q968,314.1 968,315.6 L968,324.1 Q968,325.6 966.5,325.6 L936.6,325.6 Z" fill="#ff8a1e"/>
<text x="941.9" y="323.0" font-size="8.8" fill="#111" textLength="24.2" lengthAdjust="spacingAndGlyphs">147.92</text>
<path d="M930.9,332.3 L936.6,326.6 L975.7,326.6 Q977.2,326.6 977.2,328.1 L977.2,336.5 Q977.2,338.0 975.7,338.0 L936.6,338.0 Z" fill="#5c58aa"/>
<text x="941.9" y="335.4" font-size="8.8" fill="#fff" textLength="33.1" lengthAdjust="spacingAndGlyphs">147.3280</text>
<path d="M930.9,373.1 L936.6,367.4 L966.5,367.4 Q968,367.4 968,368.9 L968,377.3 Q968,378.8 966.5,378.8 L936.6,378.8 Z" fill="#33c9c9"/>
<text x="941.9" y="376.2" font-size="8.8" fill="#111" textLength="24.2" lengthAdjust="spacingAndGlyphs">145.41</text>
<path d="M930.9,425.8 L936.6,420.1 L966.5,420.1 Q968,420.1 968,421.6 L968,430.0 Q968,431.5 966.5,431.5 L936.6,431.5 Z" fill="#ff8a1e"/>
<text x="941.9" y="428.9" font-size="8.8" fill="#111" textLength="24.2" lengthAdjust="spacingAndGlyphs">142.91</text>
<path d="M930.9,539.6 L936.6,533.8 L957.5,533.8 Q959,533.8 959,535.3 L959,543.9 Q959,545.4 957.5,545.4 L936.6,545.4 Z" fill="#000"/>
<text x="941.9" y="542.7" font-size="8.8" fill="#fff" textLength="15" lengthAdjust="spacingAndGlyphs">63.7</text>
<text class="il" x="5.1" y="479.0" textLength="21.5" lengthAdjust="spacingAndGlyphs">VWAP</text>
<text class="iv" x="29.7" y="479.0" textLength="28" lengthAdjust="spacingAndGlyphs">20 1 2 3</text>
<g transform="translate(65.7,476.8)" fill="none" stroke="#969696"><circle r="2.45" stroke-width="1.8"/><circle r="3.75" stroke-width="1.3" stroke-dasharray="1.5,1.445" transform="rotate(-15)"/></g>
<path d="M75.69999999999999,473.90000000000003 L81.5,479.7 M81.5,473.90000000000003 L75.69999999999999,479.7" stroke="#969696" stroke-width="1.7" fill="none"/>
<text class="il" x="92.4" y="479.0" textLength="48.7" lengthAdjust="spacingAndGlyphs">AUTO TREND</text>
<text class="iv" x="143.8" y="479.0" textLength="16.7" lengthAdjust="spacingAndGlyphs">4 4 2</text>
<g transform="translate(169.3,476.8)" fill="none" stroke="#969696"><circle r="2.45" stroke-width="1.8"/><circle r="3.75" stroke-width="1.3" stroke-dasharray="1.5,1.445" transform="rotate(-15)"/></g>
<path d="M178.79999999999998,473.90000000000003 L184.6,479.7 M184.6,473.90000000000003 L178.79999999999998,479.7" stroke="#969696" stroke-width="1.7" fill="none"/>
<text class="il" x="5.1" y="540.3" textLength="11.3" lengthAdjust="spacingAndGlyphs">RSI</text>
<text class="iv" x="19.7" y="540.3" textLength="7.6" lengthAdjust="spacingAndGlyphs">14</text>
<g transform="translate(35.4,537.3)" fill="none" stroke="#969696"><circle r="2.45" stroke-width="1.8"/><circle r="3.75" stroke-width="1.3" stroke-dasharray="1.5,1.445" transform="rotate(-15)"/></g>
<path d="M45.5,534.4 L51.3,540.1999999999999 M51.3,534.4 L45.5,540.1999999999999" stroke="#969696" stroke-width="1.7" fill="none"/>
<path d="M65,542.2 V533.6 M62.3,536.6 L65,533.6 L67.7,536.6" stroke="#9c9c9c" stroke-width="1" fill="none"/>
<rect x="0" y="0" width="978" height="27.7" fill="#000"/>
<rect x="0" y="0" width="978" height="1" fill="#3a3a3a"/>
<rect x="3.1" y="6.1" width="16.8" height="16.9" fill="#fff"/>
<rect x="3.7" y="6.7" width="15.6" height="15.7" fill="none" stroke="#e4e4e4" stroke-width="0.6"/>
<polyline points="5.2,19.5 8.7,11.8 12.4,15.6 17.1,10.1" fill="none" stroke="#0e8a96" stroke-width="1.5"/>
<text x="26.9" y="18.7" font-size="10.3" fill="#d4d4d4" textLength="77.6" lengthAdjust="spacing">SPOT, USD/JPY</text>
<circle cx="115.6" cy="13.1" r="2.7" fill="none" stroke="#e8e8e8" stroke-width="1.1"/>
<line x1="117.8" y1="15.2" x2="122.6" y2="18.8" stroke="#e8e8e8" stroke-width="1.6" stroke-linecap="round"/>
<rect x="928.3" y="18.2" width="9.6" height="1.7" fill="#d2d2d2"/>
<rect x="944.9" y="12.9" width="6.3" height="6.3" fill="none" stroke="#d2d2d2" stroke-width="1.4"/>
<path d="M948.2,16.2 H954.6 M952.6,14.2 L954.9,16.2 L952.6,18.2" stroke="#d2d2d2" stroke-width="1.3" fill="none"/>
<path d="M953.5,8.5 L954.4,10 L955.9,10.9 L954.4,11.8 L953.5,13.3 L952.6,11.8 L951.1,10.9 L952.6,10 Z" fill="#d2d2d2"/>
<path d="M962.3,9.3 L972.3,19.7 M972.3,9.3 L962.3,19.7" stroke="#cfcfcf" stroke-width="1.2" fill="none"/>
<text class="tb" x="6.4" y="45" textLength="22.5" lengthAdjust="spacingAndGlyphs">Daily</text>
<polygon points="33.9,40.7 41,40.7 37.45,44.2" fill="#484848"/>
<text class="tb" x="56.5" y="45" textLength="42.3" lengthAdjust="spacingAndGlyphs">Technical</text>
<polygon points="104.10000000000001,40.7 111.2,40.7 107.65,44.2" fill="#484848"/>
<text class="tb" x="126.5" y="45" textLength="32.5" lengthAdjust="spacingAndGlyphs">Display</text>
<polygon points="164.0,40.7 171.1,40.7 167.54999999999998,44.2" fill="#484848"/>
<text class="tb" x="185.9" y="45" textLength="23.2" lengthAdjust="spacingAndGlyphs">More</text>
<polygon points="214.1,40.7 221.2,40.7 217.64999999999998,44.2" fill="#484848"/>
<path d="M236.6,45.4 V38.4 Q236.6,37.4 237.6,37.4 H240.2 L241.4,38.8 H244.6 Q245.4,38.8 245.4,39.8 V40.4" fill="none" stroke="#555" stroke-width="1"/>
<path d="M236.8,45.8 L239.2,40.6 H247.4 L245,45.8 Z" fill="#333"/>
<path d="M262.4,37.4 Q262.4,36.6 263.2,36.6 H269.6 L272,39 V45.6 Q272,46.4 271.2,46.4 H263.2 Q262.4,46.4 262.4,45.6 Z" fill="#fff" stroke="#444" stroke-width="1.3"/>
<rect x="264" y="36.6" width="5.6" height="3.7" fill="#3a3a3a"/><rect x="267.4" y="37.4" width="1.1" height="1.8" fill="#fff"/>
<rect x="263" y="42" width="8.4" height="1.2" fill="#444"/>
<rect x="287" y="39.8" width="11.4" height="3" fill="#111"/>
<rect x="314" y="39.8" width="11.2" height="3" fill="#111"/><rect x="318.1" y="35.6" width="3" height="11.4" fill="#111"/>
<rect x="297.4" y="49" width="1" height="7" fill="#d0d0d0"/><rect x="324" y="49" width="1" height="7" fill="#d0d0d0"/>
<text x="747.2" y="46" font-size="10" fill="#444" textLength="83.4" lengthAdjust="spacing">CURRENT PRICE:</text>
<rect x="844.4" y="32.9" width="62.6" height="17.5" fill="#c4283a"/>
<rect x="844.9" y="33.4" width="61.6" height="16.5" fill="none" stroke="#d55a68" stroke-width="0.8"/>
<path d="M850.2,33.6 H853 V36.6 H854.8 L851.6,40 L848.4,36.6 H850.2 Z" fill="#7d1522"/>
<text x="855.9" y="44.8" font-size="11" fill="#fff" textLength="35" lengthAdjust="spacing">147.32</text>
<text x="891.7" y="44.8" font-size="7" fill="#fff">4</text>
<rect x="914.9" y="32.9" width="62.2" height="17.5" fill="#14919b"/>
<rect x="915.4" y="33.4" width="61.2" height="16.5" fill="none" stroke="#55b3ba" stroke-width="0.8"/>
<path d="M968.6,40.6 H971.4 V37.6 H973.2 L970,34.2 L966.8,37.6 H968.6 Z" fill="#0b5e66"/>
<text x="927" y="44.8" font-size="11" fill="#fff" textLength="34.4" lengthAdjust="spacing">147.33</text>
<text x="962.3" y="44.8" font-size="7" fill="#fff">4</text>
</svg></body></html>
